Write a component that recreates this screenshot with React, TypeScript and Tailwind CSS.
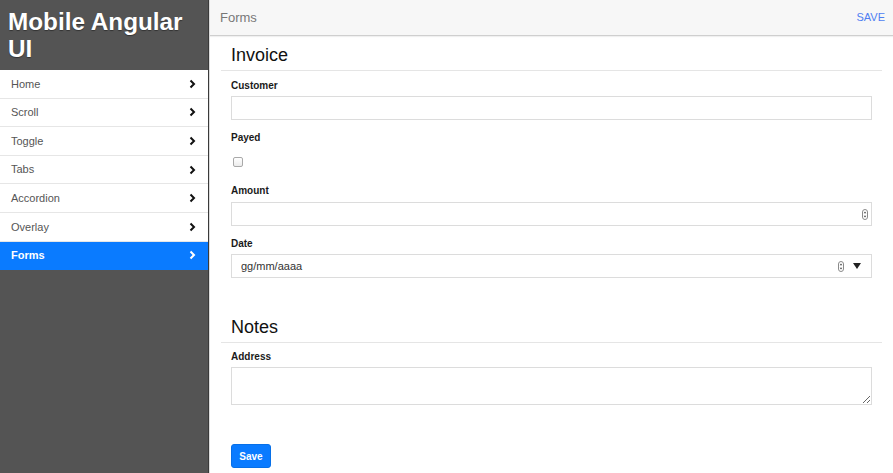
const navItems = ['Home', 'Scroll', 'Toggle', 'Tabs', 'Accordion', 'Overlay', 'Forms'];

function Chevron({ color }: { color: string }) {
  return (
    <svg width="7" height="10" viewBox="0 0 7 10" className="shrink-0">
      <polyline points="1.5,1.5 5,5 1.5,8.5" fill="none" stroke={color} strokeWidth="2" />
    </svg>
  );
}

function Spinner() {
  return (
    <svg width="6" height="11" viewBox="0 0 6 11" className="shrink-0">
      <rect x="0.5" y="0.5" width="5" height="10" rx="2.5" fill="#fff" stroke="#8a8a8a" />
      <polygon points="3,2.5 4.3,4.3 1.7,4.3" fill="#444" />
      <polygon points="3,8.5 4.3,6.7 1.7,6.7" fill="#444" />
    </svg>
  );
}

function Sidebar() {
  return (
    <div className="w-[209px] shrink-0 bg-[#545454] border-r border-[#3a3a3a] flex flex-col">
      <div className="h-[70px] pt-[8px] pl-[8px] text-[24.3px] leading-[27px] font-bold text-white [text-shadow:0_1px_1px_rgba(0,0,0,0.4)]">
        Mobile Angular
        <br />
        UI
      </div>
      {navItems.map((item) => {
        const active = item === 'Forms';
        return (
          <div
            key={item}
            className={`h-[28.6px] flex items-center justify-between pl-[11px] pr-[12px] text-[11px] border-b ${
              active ? 'bg-[#0a7bff] text-white font-bold border-[#0a7bff]' : 'bg-white text-[#555] border-[#e6e6e6]'
            }`}
          >
            <span>{item}</span>
            <Chevron color={active ? '#ffffff' : '#111111'} />
          </div>
        );
      })}
    </div>
  );
}

function Label({ children, className }: { children: React.ReactNode; className: string }) {
  return <div className={`text-[10px] leading-[14px] font-bold text-[#1a1a1a] ${className}`}>{children}</div>;
}

function Legend({ children, className }: { children: React.ReactNode; className?: string }) {
  return (
    <div className={`pt-[6px] pb-[2px] pl-[10px] text-[18px] leading-[26px] text-[#111] border-b border-[#e5e5e5] ${className ?? ''}`}>
      {children}
    </div>
  );
}

export default function App() {
  return (
    <div className="w-[893px] h-[473px] overflow-hidden flex bg-white font-['Liberation_Sans',Arial,sans-serif]">
      <Sidebar />
      <div className="flex-1 flex flex-col border-l border-[#dcdcdc]">
        <div className="h-[36px] shrink-0 flex items-center justify-between pl-[10px] pr-[8px] bg-[#f7f7f7] border-b border-[#cfcfcf] shadow-[0_1px_1px_rgba(0,0,0,0.06)]">
          <span className="text-[13px] text-[#777]">Forms</span>
          <span className="text-[11px] text-[#4f7ff2]">SAVE</span>
        </div>
        <div className="pl-[11px] pr-[11px] flex flex-col">
          <Legend>Invoice</Legend>
          <div className="px-[10px] flex flex-col">
            <Label className="mt-[8px]">Customer</Label>
            <div className="mt-[3px] h-[24px] border border-[#dcdcdc] bg-white" />
            <Label className="mt-[11px]">Payed</Label>
            <div className="mt-[12px] ml-[2px] w-[10px] h-[10px] rounded-[2px] border border-[#a9a9a9] bg-gradient-to-b from-white to-[#ececec]" />
            <Label className="mt-[17px]">Amount</Label>
            <div className="mt-[4px] h-[24px] border border-[#dcdcdc] bg-white flex items-center justify-end pr-[3px]">
              <Spinner />
            </div>
            <Label className="mt-[11px]">Date</Label>
            <div className="mt-[3px] h-[24px] border border-[#dcdcdc] bg-white flex items-center pl-[9px] pr-[10px] gap-[8px]">
              <span className="flex-1 text-[11px] text-[#333]">gg/mm/aaaa</span>
              <Spinner />
              <svg width="8" height="6" viewBox="0 0 8 6" className="ml-[1px]">
                <polygon points="0,0 8,0 4,6" fill="#222" />
              </svg>
            </div>
          </div>
          <Legend className="mt-[30px]">Notes</Legend>
          <div className="px-[10px] flex flex-col">
            <Label className="mt-[7px]">Address</Label>
            <textarea className="mt-[3px] h-[38px] border border-[#dcdcdc] bg-white outline-none" />
            <button className="mt-[39px] w-[40px] h-[24px] rounded-[3px] bg-[#0a7bff] border border-[#0770e8] text-white text-[10px] font-bold">
              Save
            </button>
          </div>
        </div>
      </div>
    </div>
  );
}
